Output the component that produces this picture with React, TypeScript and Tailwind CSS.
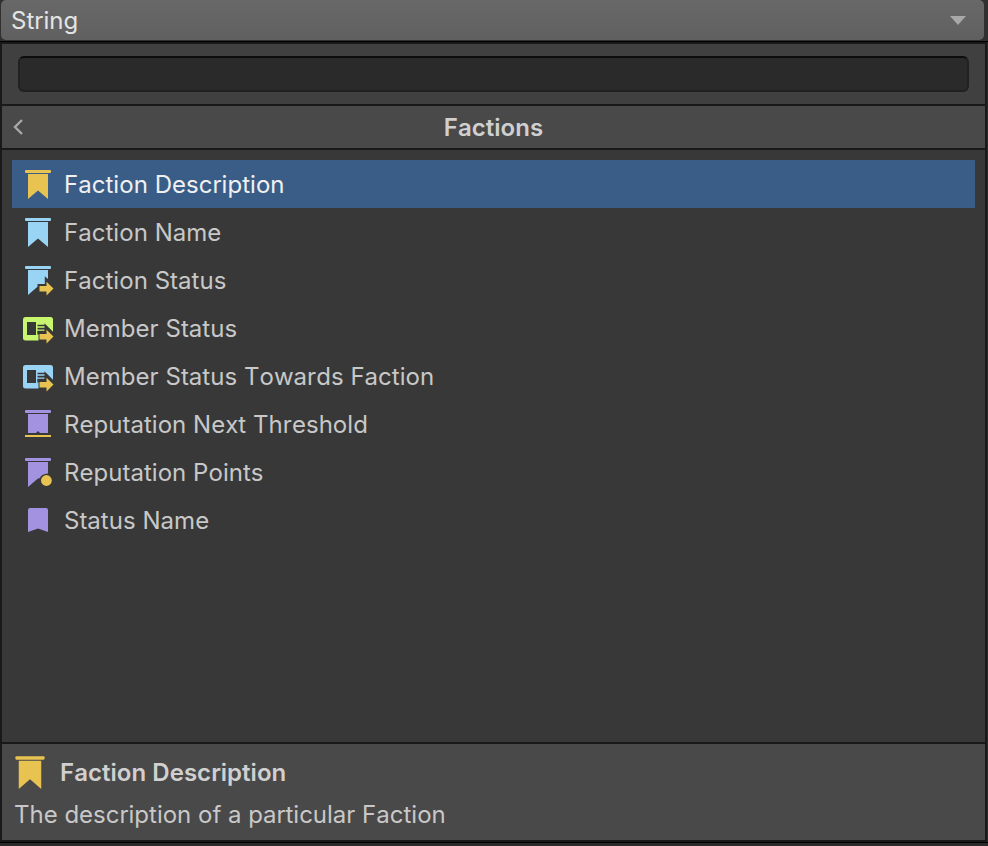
import React from "react";

type IconKind =
  | "description"
  | "name"
  | "status"
  | "member"
  | "memberTowards"
  | "threshold"
  | "points"
  | "statusName";

const YELLOW = "#e8c351";
const BLUE = "#9ad4f5";
const GREEN = "#c8f76f";
const PURPLE = "#a392e0";

function Arrow() {
  return <path d="M17.5 22H24.5V17.7L31.5 24.6L24.5 31.5V27.5H17.5Z" fill={YELLOW} />;
}

function Banner({ color }: { color: string }) {
  return (
    <>
      <rect x="3" y="2" width="26" height="3" rx="1" fill={color} />
      <path d="M6 6H26V31L16 22.5L6 31Z" fill={color} />
    </>
  );
}

function MemberCard({ color }: { color: string }) {
  return (
    <>
      <rect x="1" y="5" width="30" height="23.5" rx="2.5" fill={color} />
      <rect x="5" y="10" width="9" height="13" fill="#383838" />
      <path
        d="M15.5 12.7H22.5V11.2L31.5 20.2V29H16.5V22.5H15.3V18.8H22.5V17.4H15.5V15.8H22.5V14.3H15.5Z"
        fill="#383838"
      />
      <Arrow />
    </>
  );
}

function Icon({ kind, size = 32 }: { kind: IconKind; size?: number }) {
  return (
    <svg width={size} height={size} viewBox="0 0 32 32" className="shrink-0">
      {kind === "description" && <Banner color={YELLOW} />}
      {kind === "name" && <Banner color={BLUE} />}
      {kind === "status" && (
        <>
          <rect x="3" y="2" width="26" height="3" rx="1" fill={BLUE} />
          <path d="M6 6H26V15L22.8 12.2V20H15.5V22.7L6 31Z" fill={BLUE} />
          <Arrow />
        </>
      )}
      {kind === "member" && <MemberCard color={GREEN} />}
      {kind === "memberTowards" && <MemberCard color={BLUE} />}
      {kind === "threshold" && (
        <>
          <rect x="3" y="2" width="26" height="3" rx="1" fill={PURPLE} />
          <path d="M6 6H26V25H18L16 23L14 25H6Z" fill={PURPLE} />
          <rect x="3" y="27" width="26" height="2" fill={YELLOW} />
        </>
      )}
      {kind === "points" && (
        <>
          <rect x="3" y="2" width="26" height="3" rx="1" fill={PURPLE} />
          <path d="M6 6H26V17.5Q19 18 18 22L16 22.5L6 31Z" fill={PURPLE} />
          <circle cx="24.4" cy="24.5" r="5.4" fill={YELLOW} />
        </>
      )}
      {kind === "statusName" && (
        <path d="M6 6Q6 4 8 4H24Q26 4 26 6V28L16 24.5L6 28Z" fill={PURPLE} />
      )}
    </svg>
  );
}

const items: { label: string; icon: IconKind }[] = [
  { label: "Faction Description", icon: "description" },
  { label: "Faction Name", icon: "name" },
  { label: "Faction Status", icon: "status" },
  { label: "Member Status", icon: "member" },
  { label: "Member Status Towards Faction", icon: "memberTowards" },
  { label: "Reputation Next Threshold", icon: "threshold" },
  { label: "Reputation Points", icon: "points" },
  { label: "Status Name", icon: "statusName" },
];

export default function App() {
  return (
    <div className="flex h-[846px] w-[988px] flex-col overflow-hidden bg-[#2c2b2b] font-['Inter',sans-serif] text-2xl leading-8 tracking-[0.04px] text-[#c8c8c8] [font-kerning:none]">
      <div className="flex h-[41px] shrink-0 bg-[#303030] pl-px pr-1 pb-px">
        <button className="flex h-10 flex-1 items-center justify-between rounded-[5px] bg-linear-to-b from-[#686868] to-[#606060] pl-2.5 pr-[18px] text-[#e4e4e4]">
          <span className="pt-0.5">String</span>
          <svg width="16" height="9" viewBox="0 0 16 9">
            <path d="M0 0H16L8 9Z" fill="#a8a8a8" />
          </svg>
        </button>
      </div>
      <div className="h-px shrink-0 bg-black" />
      <div className="mr-px flex h-[800px] shrink-0 flex-col border-2 border-[#191919] bg-[#383838]">
        <div className="h-[62px] shrink-0 border-b-2 border-[#191919] bg-[#404040] px-4 pt-3">
          <div className="h-9 rounded-md border-2 border-[#212121] border-t-[#0d0d0d] bg-[#2a2a2a]" />
        </div>
        <div className="flex h-11 shrink-0 items-center border-b-2 border-[#191919] bg-[#494949] px-[11px]">
          <svg width="10" height="16" viewBox="0 0 10 16" fill="none">
            <path d="M9 1L2 8L9 15" stroke="#a8a8a8" strokeWidth="2.4" />
          </svg>
          <h1 className="flex-1 pr-2.5 pt-0.5 text-center font-semibold text-[#d0d0d0]">Factions</h1>
        </div>
        <ul className="flex-1 p-2.5">
          {items.map((item, i) => (
            <li
              key={item.label}
              className={`flex h-12 items-center gap-2.5 pl-2.5 ${i === 0 ? "bg-[#3a5d87] text-[#f0f0f0]" : ""}`}
            >
              <Icon kind={item.icon} />
              <span className="pt-0.5">{item.label}</span>
            </li>
          ))}
        </ul>
        <div className="h-[98px] shrink-0 border-t-2 border-[#191919] bg-[#494949] pl-[10px] pt-2.5">
          <div className="flex h-9 items-center gap-3">
            <Icon kind="description" size={36} />
            <span className="pt-0.5 font-semibold text-[#d0d0d0]">Faction Description</span>
          </div>
          <p className="mt-[9px] pl-0.5 tracking-normal">The description of a particular Faction</p>
        </div>
      </div>
      <div className="h-px shrink-0 bg-black" />
    </div>
  );
}
